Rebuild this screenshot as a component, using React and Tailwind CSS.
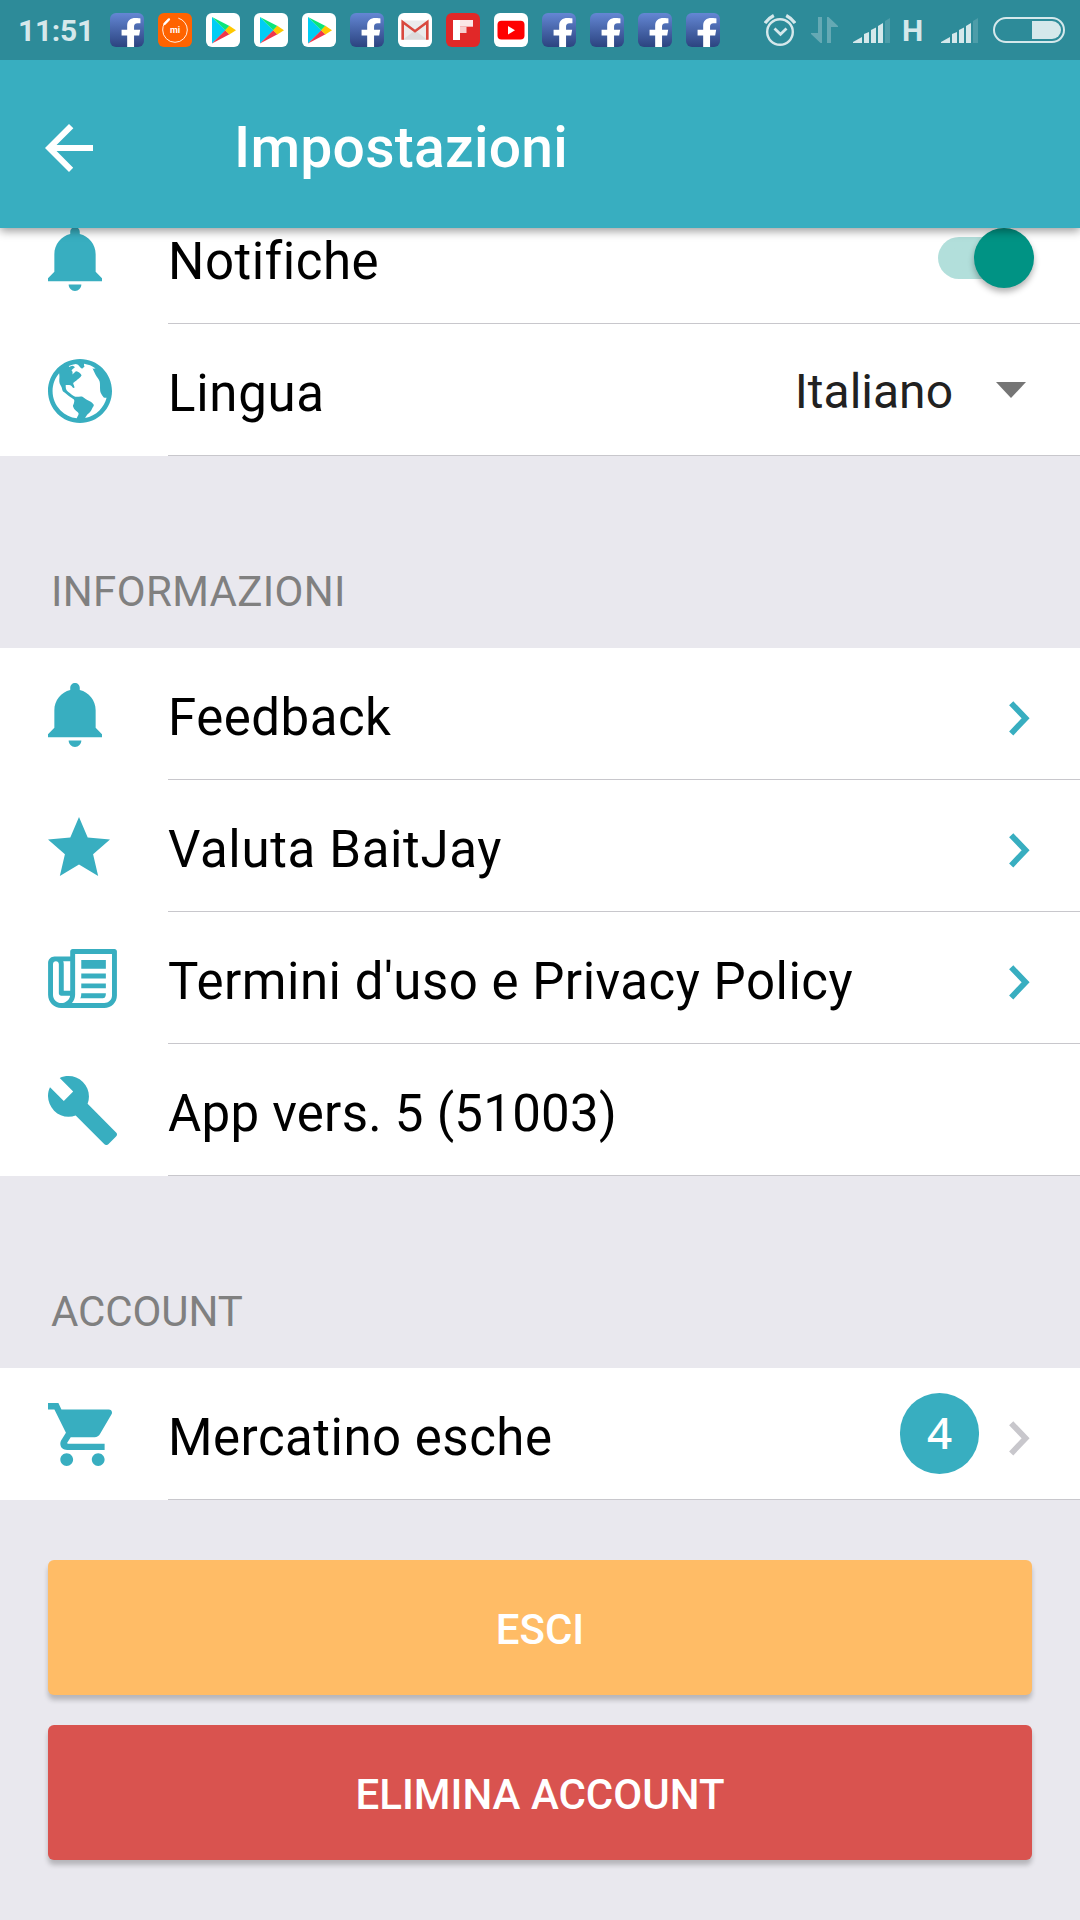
import React, { useState } from "react";
import {
  IoMdArrowBack,
  IoMdBuild,
  IoMdCart,
  IoMdGlobe,
  IoMdNotifications,
  IoMdPaper,
  IoMdStar,
} from "react-icons/io";
import { FaFacebookF } from "react-icons/fa";

// Status bar notification icons

const FacebookIcon = () => (
  <div className="relative size-[34px] rounded-md overflow-hidden bg-linear-to-b from-[#6487d4] to-[#2c4480]">
    <FaFacebookF className="absolute left-[10px] top-[5px] w-[22px] h-[31px] text-white" preserveAspectRatio="none" />
  </div>
);

const MiIcon = () => (
  <svg viewBox="0 0 34 34" className="size-[34px]">
    <rect width="34" height="34" rx="6" fill="#ff6300" />
    <circle cx="17" cy="17" r="12.3" fill="none" stroke="#fff" strokeWidth="0.9" strokeDasharray="68 9.3" strokeDashoffset="-61" />
    <path d="M6.5 11l4.4-4.6" stroke="#fff" strokeWidth="2.4" strokeLinecap="round" />
    <text x="17" y="20" fill="#fff" fontSize="9" fontWeight="700" textAnchor="middle">mi</text>
  </svg>
);

const PlayIcon = () => (
  <svg viewBox="0 0 34 34" className="size-[34px]">
    <rect width="34" height="34" rx="6" fill="#fff" />
    <path d="M6 4v26.500l13.500-13.300z" fill="#00cdf5" />
    <path d="M6 4l17.500 9-4.200 4.200z" fill="#0be57b" />
    <path d="M6 30.500l17.500-9.300-4.200-4z" fill="#f0364b" />
    <path d="M23.300 12.800L30 17.200l-6.700 4.200-4.200-4.200z" fill="#ffc800" />
  </svg>
);

const GmailIcon = () => (
  <svg viewBox="0 0 34 34" className="size-[34px]">
    <rect width="34" height="34" rx="6" fill="#fff" />
    <rect x="3.500" y="7.500" width="27" height="19.500" rx="1.500" fill="#ebebeb" />
    <path d="M5 26.500l12-9 12 9z" fill="#dcdcdc" />
    <path d="M4.700 26.800V9l12.300 9.200L29.300 9v17.800" fill="none" stroke="#d9493e" strokeWidth="2.600" />
  </svg>
);

const FlipboardIcon = () => (
  <svg viewBox="0 0 34 34" className="size-[34px]">
    <rect width="34" height="34" rx="6" fill="#e12828" />
    <path d="M7 7h7v20H7z" fill="#fff" />
    <path d="M14 7h13v6.700H14z" fill="#fbe6e6" />
    <path d="M14 13.700h6.500v6.300H14z" fill="#f7cfcf" />
  </svg>
);

const YoutubeIcon = () => (
  <svg viewBox="0 0 34 34" className="size-[34px]">
    <rect width="34" height="34" rx="6" fill="#fff" />
    <rect x="3.500" y="7.800" width="27" height="18.700" rx="4" fill="#f00" />
    <path d="M14 13l7 4.200-7 4.200z" fill="#fff" />
  </svg>
);

// System icons on the right side of the status bar

const AlarmIcon = () => (
  <svg viewBox="0 0 32 32" className="w-8 h-8" fill="none" stroke="#d5e8eb" strokeWidth="2.400">
    <circle cx="16" cy="18" r="12.800" />
    <path d="M1 9.200Q4 4.500 9.800 1.500M31 9.200Q28 4.500 22.200 1.500" strokeWidth="3.200" />
    <path d="M10.500 14.500l6 5.700 6-5.700" strokeWidth="2.800" />
  </svg>
);

const DataIcon = () => (
  <svg viewBox="0 0 27 26" className="w-[27px] h-[26px]" fill="#65a9b4">
    <path d="M7 0h4v26h-1.500L0 17v-1h7z" />
    <path d="M16 26h4V10h7V9L17.500 0H16z" />
  </svg>
);

const SignalIcon = () => (
  <svg viewBox="0 0 37 26" className="w-[37px] h-[26px]" fill="#d5e8eb">
    <path d="M0 25v-1l9-5v6z" />
    <path d="M11 25v-9l5-2v11z" />
    <path d="M18 25V12l5-2.500V25z" />
    <path d="M25 25V8l5-3v20z" />
    <path d="M32 25V3l5-3v25z" fill="#4d9da9" />
  </svg>
);

const BatteryIcon = () => (
  <svg viewBox="0 0 72 26" className="w-[72px] h-[26px]">
    <rect x="1" y="1" width="70" height="24" rx="12" fill="none" stroke="#d5e8eb" strokeWidth="2" />
    <path d="M39 4h20a9 9 0 0 1 0 18H39z" fill="#d5e8eb" />
  </svg>
);

const StatusBar = () => (
  <div className="flex items-center h-[60px] pl-[18px] pr-[15px] bg-[#2d8b99]">
    <span className="w-[92px] pt-px text-[30px] leading-none font-bold tracking-[-0.3px] text-[#d5e8eb]">11:51</span>
    <div className="flex gap-[14px]">
      <FacebookIcon />
      <MiIcon />
      <PlayIcon />
      <PlayIcon />
      <PlayIcon />
      <FacebookIcon />
      <GmailIcon />
      <FlipboardIcon />
      <YoutubeIcon />
      <FacebookIcon />
      <FacebookIcon />
      <FacebookIcon />
      <FacebookIcon />
    </div>
    <div className="flex items-center ml-auto">
      <AlarmIcon />
      <div className="ml-[15px]"><DataIcon /></div>
      <div className="ml-[15px] pt-px"><SignalIcon /></div>
      <span className="w-[51px] pt-px pr-[6px] text-center text-[30px] leading-none font-bold text-[#d5e8eb]">H</span>
      <div className="pt-px"><SignalIcon /></div>
      <div className="ml-[15px]"><BatteryIcon /></div>
    </div>
  </div>
);

const Header = () => (
  <header className="relative z-10 shadow-[0_3px_9px_rgba(0,0,0,0.4)]">
    <StatusBar />
    <div className="flex items-center h-[168px] pl-[45px] bg-[#38aec0] text-white">
      <button type="button" aria-label="Indietro" className="pt-2">
        <IoMdArrowBack viewBox="85 85 342 342" className="size-12" />
      </button>
      <h1 className="ml-[141px] pt-[7px] text-[57px] leading-none font-medium tracking-[0.25px]">Impostazioni</h1>
    </div>
  </header>
);

const Chevron = ({ className }) => (
  <svg viewBox="0 0 21 35" className={"w-[21px] h-[35px] mt-[9px] mr-[50px] " + className} fill="none" stroke="currentColor" strokeWidth="5.800">
    <path d="M2.200 2.200L16.600 17.300L2.200 32.400" />
  </svg>
);

const Row = ({ icon, label, labelClass = "tracking-[0.5px]", children }) => (
  <div className="flex h-[132px] pl-12 bg-white">
    <div className="flex items-center w-[120px] shrink-0 pt-px text-[#38aec0]">{icon}</div>
    <div className="flex flex-1 items-center border-b border-[#c8c7cc]">
      <span className={"flex-1 pt-2 text-[51px] leading-none text-black " + labelClass}>{label}</span>
      {children}
    </div>
  </div>
);

const SectionTitle = ({ children, className }) => (
  <h2 className={"h-48 pl-[51px] pt-[115px] text-[42px] leading-none text-[#808080] " + className}>{children}</h2>
);

const Toggle = ({ checked, onChange }) => (
  <button
    type="button"
    role="switch"
    aria-checked={checked}
    aria-label="Notifiche"
    onClick={() => onChange(!checked)}
    className="flex items-center w-24 h-[42px] mr-[46px] rounded-full bg-linear-to-r from-[#b2dfdb] from-70% to-transparent to-70%"
  >
    <span className={"size-[60px] shrink-0 rounded-full bg-[#009384] shadow-[0_4px_6px_rgba(0,0,0,0.3)] " + (checked ? "ml-[36px]" : "ml-0")} />
  </button>
);

const Bell = () => <IoMdNotifications viewBox="80 48 352 416" className="w-[54px] h-16" />;

export default function App() {
  const [notifiche, setNotifiche] = useState(true);

  return (
    <div className="w-[1080px] h-[1920px] overflow-hidden bg-[#e9e8ee] font-['Roboto',sans-serif]">
      <Header />

      {/* The list is scrolled a little under the header */}
      <main className="-mt-9">
        <Row icon={<Bell />} label="Notifiche">
          <Toggle checked={notifiche} onChange={setNotifiche} />
        </Row>
        <Row icon={<IoMdGlobe viewBox="48 48 416 416" className="size-16" />} label="Lingua" labelClass="tracking-[0.7px]">
          <span className="pt-1 text-[48px] leading-none text-[#212121]">Italiano</span>
          <svg viewBox="0 0 30 16" className="w-[30px] h-4 ml-[43px] mr-[54px]" fill="#757575">
            <path d="M0 0h30L15 16z" />
          </svg>
        </Row>

        <SectionTitle className="tracking-[0.35px]">INFORMAZIONI</SectionTitle>
        <Row icon={<Bell />} label="Feedback">
          <Chevron className="text-[#38aec0]" />
        </Row>
        <Row icon={<IoMdStar viewBox="54 64 404 384" className="w-[62px] h-[59px]" />} label="Valuta BaitJay" labelClass="tracking-[0.65px]">
          <Chevron className="text-[#38aec0]" />
        </Row>
        <Row icon={<IoMdPaper viewBox="32 64 448 384" className="w-[69px] h-[59px]" />} label="Termini d'uso e Privacy Policy">
          <Chevron className="text-[#38aec0]" />
        </Row>
        <Row icon={<IoMdBuild viewBox="32 32 448 448" className="size-[69px]" />} label="App vers. 5 (51003)" labelClass="tracking-[0.25px]" />

        <SectionTitle className="tracking-[-0.1px]">ACCOUNT</SectionTitle>
        <Row icon={<IoMdCart viewBox="48 51.2 416 409.6" className="w-16 h-[63px]" />} label="Mercatino esche">
          <span className="flex items-center justify-center w-[79px] h-[81px] pb-[3px] mr-[30px] rounded-full bg-[#38aec0] text-[44px] leading-none font-medium text-white font-['Noto_Sans',sans-serif]">
            4
          </span>
          <Chevron className="text-[#c8c7cc]" />
        </Row>

        <div className="flex flex-col gap-[30px] px-12 pt-[60px]">
          <button type="button" className="h-[135px] pt-[5px] rounded-md bg-[#ffbc66] text-white text-[42px] leading-none font-medium shadow-[0_5px_5px_rgba(0,0,0,0.22)]">
            ESCI
          </button>
          <button type="button" className="h-[135px] pt-[5px] rounded-md bg-[#d9534f] text-white text-[42px] leading-none font-medium shadow-[0_5px_5px_rgba(0,0,0,0.22)]">
            ELIMINA ACCOUNT
          </button>
        </div>
      </main>
    </div>
  );
}
